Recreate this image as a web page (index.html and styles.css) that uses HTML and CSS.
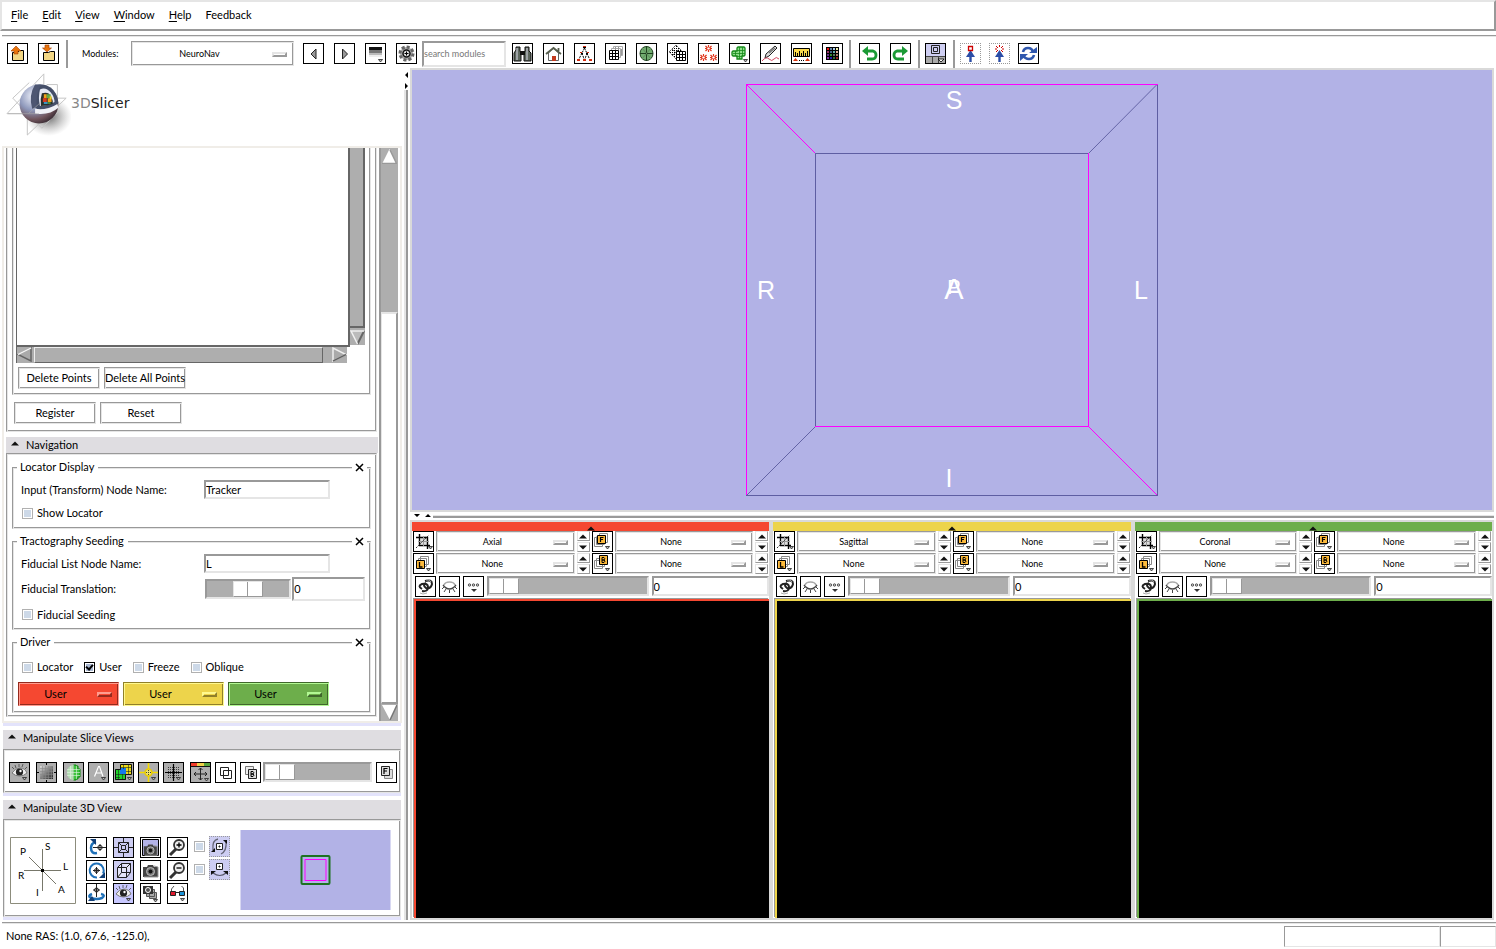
FILE: index.html
```html
<!DOCTYPE html>
<html lang="en">
<head>
<meta charset="utf-8">
<title>3D Slicer</title>
<link rel="stylesheet" href="styles.css">
</head>
<body>
<svg class="defs" aria-hidden="true">
  <defs>
    <pattern id="dots" width="2" height="2" patternUnits="userSpaceOnUse"><rect width="1" height="1" fill="#000"/></pattern>
    <linearGradient id="fade" x1="0" y1="0" x2="1" y2="1"><stop offset="0" stop-color="#ddd"/><stop offset="1" stop-color="#222"/></linearGradient>
    <symbol id="drop" viewBox="0 0 5 4"><path d="M.5.5h4L2.5 3z" fill="#bbb" stroke="#222" stroke-width=".8"/></symbol>
    <symbol id="i-fit" viewBox="0 0 19 19"><path d="M7 6l5-2 2 2v6H6z" fill="#ddd"/><path d="M5.500 2v11.500H16M2 5.500h11.500V17" fill="none" stroke="#000" stroke-width="1.400"/><path d="M9.500 4v10M4 9.500h11" stroke="#999"/><path d="M2 16L15 3" stroke="#333" stroke-dasharray="2 1"/><use href="#drop" x="14" y="14" width="5" height="4"/></symbol>
    <symbol id="i-label" viewBox="0 0 19 19"><path d="M6.500 2.500h8v8h-8zM4.500 4.500h8v8h-8z" fill="#fff" stroke="#888"/><path d="M2.500 6.500h8v8h-8z" fill="#fdba3b" stroke="#000"/><path d="M5.500 8v5h3" fill="none" stroke="#000" stroke-width="1.300"/><use href="#drop" x="12" y="14" width="5" height="4"/></symbol>
    <symbol id="i-fore" viewBox="0 0 19 19"><path d="M1.500 5.500h8v9h-8zM6.500 1.500h8v9h-8z" fill="#fff" stroke="#888"/><path d="M3.500 4.500v8h8" fill="none" stroke="#888"/><path d="M4.500 3.500h8v8h-8z" fill="#fdba3b" stroke="#000"/><path d="M7.500 10v-4.500h3M7.500 7.500h2.500" fill="none" stroke="#000" stroke-width="1.200"/><use href="#drop" x="12" y="14" width="5" height="4"/></symbol>
    <symbol id="i-back" viewBox="0 0 19 19"><path d="M1.500 6.500h8v8h-8zM3.500 4.500h8v8h-8z" fill="#fff" stroke="#888"/><path d="M6.500 1.500h8v9h-8z" fill="#fdba3b" stroke="#000"/><path d="M9 8.500v-5h2q1.500 1 0 2.500h-2h2q2 1 0 2.500z" fill="none" stroke="#000"/><use href="#drop" x="12" y="14" width="5" height="4"/></symbol>
    <symbol id="i-link" viewBox="0 0 19 19"><g fill="none" stroke="#222" stroke-width="2"><path d="M6 12Q1 9 6 7Q12 6 12 10Q12 15 6 14"/><path d="M9 4Q16 2 16 7Q15 12 10 11Q6 8 10 6"/></g><path d="M4 16l3 1 4-1M10 3q4-1 5 2" fill="none" stroke="#aaa"/></symbol>
    <symbol id="i-lash" viewBox="0 0 19 19"><path d="M4 8Q5 5 9.500 5T15 8" fill="none" stroke="#aaa" stroke-width="1.500"/><path d="M3 8q3 4 6.500 4T16 8" fill="none" stroke="#444" stroke-width="1.300"/><path d="M4 10l-2 2M6 12l-2 3M9.500 13v3M13 12l2 3M15 10l2 2" stroke="#444"/></symbol>
    <symbol id="i-more" viewBox="0 0 19 19"><g fill="#ccc" stroke="#333" stroke-width=".8"><circle cx="5.500" cy="8" r="1.200"/><circle cx="9.500" cy="8" r="1.200"/><circle cx="13.500" cy="8" r="1.200"/></g><path d="M7 12h6l-3 3z" fill="#333"/></symbol>
    <symbol id="i-cam" viewBox="0 0 19 19"><path d="M2 6h4l1-2h5l1 2h4v10H2z" fill="#444"/><circle cx="9.500" cy="10.500" r="4" fill="#777" stroke="#bbb"/><circle cx="9.500" cy="10.500" r="2" fill="#111"/><path d="M13 5l4 1v10M3 16h14" fill="none" stroke="#999"/></symbol>
    <symbol id="i-eye" viewBox="0 0 19 19"><path d="M2 10Q5 5 10 5t7 5Q14 13 9.500 13T2 10z" fill="#eee" stroke="#777"/><circle cx="9.500" cy="9" r="3.600" fill="#222"/><circle cx="10.500" cy="8" r="1.200" fill="#fff"/><path d="M4 6L2 4M6 5L5 2M9 4V1M12 4l1-3M15 6l2-2" stroke="#444" stroke-width=".8"/><use href="#drop" x="12" y="14" width="5" height="4"/></symbol>
    <symbol id="i-x" viewBox="0 0 9 9"><path d="M1 1l7 7M8 1L1 8" stroke="#000" stroke-width="1.500"/></symbol>
    <symbol id="i-up" viewBox="0 0 8 5"><path d="M0 4.500L4 .5l4 4z" fill="#111"/></symbol>
    <symbol id="i-down" viewBox="0 0 8 5"><path d="M0 .5h8l-4 4z" fill="#111"/></symbol>
  </defs>
</svg>

<nav class="menubar">
  <button><u>F</u>ile</button><button><u>E</u>dit</button><button><u>V</u>iew</button><button><u>W</u>indow</button><button><u>H</u>elp</button><button>Feedback</button>
</nav>

<div class="toolbar">
  <div class="tools">
    <button class="ico" aria-label="Load scene"><svg viewBox="0 0 19 19"><path d="M4.500 8.500h5l2-2h4v10h-11z" fill="#f2d684" stroke="#000"/><path d="M8 2L3 7h3v3h4V7h3z" fill="#e8740c" stroke="#a33c00" stroke-width=".6"/></svg></button>
    <button class="ico" aria-label="Save scene"><svg viewBox="0 0 19 19"><path d="M4.500 8.500h5l2-1h4v9h-11z" fill="#f2d684" stroke="#000"/><path d="M8 8L3.500 4H6V1h4v3h2.500z" fill="#e8740c" stroke="#a33c00" stroke-width=".6"/></svg></button>
  </div>
  <span class="sep"></span>
  <label class="modules-label" for="modules">Modules:</label>
  <span class="option modules"><select id="modules"><option>NeuroNav</option></select></span>
  <div class="tools">
    <button class="ico" aria-label="Previous module"><svg viewBox="0 0 19 19"><path d="M12 5v10L7 10z" fill="#999" stroke="#222"/></svg></button>
    <button class="ico" aria-label="Next module"><svg viewBox="0 0 19 19"><path d="M7.500 5v10l5-5z" fill="#999" stroke="#222"/></svg></button>
    <button class="ico" aria-label="Module history"><svg viewBox="0 0 19 19"><path d="M3 3h13v3H3z" fill="#111"/><path d="M3 6h13v3H3z" fill="#777"/><path d="M3 9h13v2H3z" fill="#bbb"/><path d="M3 11h13v2H3z" fill="#eee"/><use href="#drop" x="12" y="15" width="5" height="4"/></svg></button>
    <button class="ico" aria-label="Refresh modules"><svg viewBox="0 0 19 19"><circle cx="9.500" cy="9.500" r="6.500" fill="#aaa" stroke="#666" stroke-width="3" stroke-dasharray="3 2"/><circle cx="9.500" cy="9.500" r="3.500" fill="#ddd" stroke="#111" stroke-width="1.500"/><path d="M9.500 7.500v4M7.500 9.500h4" stroke="#000"/></svg></button>
  </div>
  <input class="entry search" type="text" placeholder="search modules" aria-label="search modules">
  <div class="tools">
    <button class="ico" aria-label="Find"><svg viewBox="0 0 19 19"><path d="M3 3h4v4l1 2v8H1v-8l2-3zM12 3h4v4l2 2v8h-7V9l1-2z" fill="#5c665c" stroke="#111"/><path d="M7 7h5v4H7z" fill="#111"/><path d="M4 4v12M14 4v12" stroke="#dde"/></svg></button>
    <button class="ico" aria-label="Home"><svg viewBox="0 0 19 19"><path d="M4.500 9v7.500h10V9l-5-5z" fill="#fff" stroke="#666"/><path d="M2 10l7.500-6 7.500 6M14.500 7V4" fill="none" stroke="#555d4c" stroke-width="1.800"/><path d="M8 12h4v5H8z" fill="#c33a1e"/></svg></button>
    <button class="ico" aria-label="Data"><svg viewBox="0 0 19 19"><path d="M9.500 4L4 15M9.500 4l5 11M7 9l2 6M12 9l-2 6" stroke="#000" stroke-dasharray="2 1"/><path d="M8 2h3v1H8zM5 8h2v1H5zM12 8h2v1h-2zM2 15h3v2H2zM8 15h3v2H8zM14 15h3v2h-3z" fill="#d32d10"/><path d="M8 3.500h3M6 9.500h2M11 9.500h2" stroke="#000"/></svg></button>
    <button class="ico" aria-label="Volumes"><svg viewBox="0 0 19 19"><g fill="#fff" stroke="#aaa"><path d="M7.500 2.500h9v9h-9z"/><path d="M5.500 4.500h9v9h-9z"/></g><g stroke="#999"><path d="M9.500 3v3M12.500 3v3M15.500 5v6"/></g><path d="M3.500 6.500h9v9h-9zM3.500 9.500h9M3.500 12.500h9M6.500 6.500v9M9.500 6.500v9" fill="#fff" stroke="#000"/></svg></button>
    <button class="ico" aria-label="Models"><svg viewBox="0 0 19 19"><ellipse cx="9.500" cy="9.500" rx="6.500" ry="7" fill="#72ad70" stroke="#20401f"/><path d="M9.500 2v15M3 9.500h13" stroke="#20401f"/><path d="M5 4l9 11M14 4L5 15" stroke="#5b8b59"/></svg></button>
    <button class="ico" aria-label="Transforms"><svg viewBox="0 0 19 19"><path d="M8 1l7 7-7 7-7-7z" fill="url(#dots)"/><path d="M8 1l7 7-7 7-7-7zM4 5l7 7M5 11l7-7" fill="none" stroke="#222" stroke-dasharray="1 1"/><path d="M8.500 7.500h9v9h-9zM8.500 10.500h9M8.500 13.500h9M11.500 7.500v9M14.500 7.500v9" fill="#fff" stroke="#000"/></svg></button>
    <button class="ico" aria-label="Fiducials"><svg viewBox="0 0 19 19"><g stroke="#e0341a" stroke-width="1.200"><path id="burst" d="M9.500 1v2.500M9.500 5.500V8M6.500 2l2 2M12.500 2l-2 2M6.500 7l2-2M12.500 7l-2-2M6 4.500h2M11 4.500h2"/><use href="#burst" x="-5" y="9"/><use href="#burst" x="5" y="9"/></g></svg></button>
    <button class="ico" aria-label="Editor"><svg viewBox="0 0 19 19"><path d="M8 3h6l1 1v7l-1 1h-2v3H7v-3H3l-1-1V8l1-1h4V4z" fill="#8fe08c" stroke="#178a1b" stroke-width="1.300"/><path d="M3 9.500h12M9.500 3v12M12.500 3v9M5.500 7v5M7 6.500h8M6 12.500h6" stroke="#178a1b" stroke-width=".8"/><use href="#drop" x="13" y="15" width="5" height="4"/></svg></button>
    <button class="ico" aria-label="Annotate"><svg viewBox="0 0 19 19"><path d="M5 10L14 2l2 2-8 8-4 2z" fill="#ddd" stroke="#222"/><path d="M8 9l6-5" stroke="#777" stroke-width="1.500"/><path d="M1 17q4-5 7-2t5 0 5 0" fill="none" stroke="#d34a62"/></svg></button>
    <button class="ico" aria-label="Measurements"><svg viewBox="0 0 19 19"><path d="M1.500 4.500h16v8h-16z" fill="#fbd94b" stroke="#000"/><path d="M3.500 8v4M5.500 9v3M7.500 7v5M9.500 9v3M11.500 7v5M13.500 9v3M15.500 7v5" stroke="#000"/><path d="M1 17l2.500-3L6 17zM13 17l2.500-3L18 17z" fill="#d8340e"/><path d="M7 16.500h6" stroke="#000" stroke-dasharray="1 1"/></svg></button>
    <button class="ico" aria-label="Colors"><svg viewBox="0 0 19 19"><path d="M3 3h13v13H3z" fill="#000"/><g><path d="M4 4h2v2H4z" fill="#e11"/><path d="M7 4h2v2H7z" fill="#68a"/><path d="M10 4h2v2h-2z" fill="#ace"/><path d="M13 4h2v2h-2z" fill="#eea"/><path d="M4 7h2v2H4z" fill="#936"/><path d="M7 7h2v2H7z" fill="#468"/><path d="M10 7h2v2h-2z" fill="#6aa"/><path d="M13 7h2v2h-2z" fill="#da9"/><path d="M4 10h2v2H4z" fill="#638"/><path d="M7 10h2v2H7z" fill="#383"/><path d="M10 10h2v2h-2z" fill="#575"/><path d="M13 10h2v2h-2z" fill="#a76"/><path d="M4 13h2v2H4z" fill="#83a"/><path d="M7 13h2v2H7z" fill="#22a"/><path d="M10 13h2v2h-2z" fill="#363"/><path d="M13 13h2v2h-2z" fill="#922"/></g></svg></button>
  </div>
  <span class="sep sep-wide"></span>
  <div class="tools">
    <button class="ico" aria-label="Undo"><svg viewBox="0 0 19 19"><path d="M5 7h8q3 1 3 4 0 4-4 4H7" fill="none" stroke="#1a9a35" stroke-width="2.800"/><path d="M8 2v10L2 7z" fill="#1a9a35"/></svg></button>
    <button class="ico" aria-label="Redo"><svg viewBox="0 0 19 19"><path d="M14 7H6q-3 1-3 4 0 4 4 4h6" fill="none" stroke="#1a9a35" stroke-width="2.800"/><path d="M11 2v10l6-5z" fill="#1a9a35"/></svg></button>
  </div>
  <span class="sep"></span>
  <button class="ico" aria-label="Layout"><svg viewBox="0 0 19 19"><path d="M0 0h19v12H0z" fill="#cfcff2"/><path d="M0 12h19v7H0z" fill="#aaa"/><path d="M0 12.500h19M6.500 13v6M12.500 13v6" stroke="#444"/><path d="M5.500 1.500h8v8h-8zM7.500 3.500h4v4h-4z" fill="none" stroke="#222"/><path d="M12 15h6l-3 3z" fill="#fff" stroke="#000" stroke-width=".8"/></svg></button>
  <span class="sep"></span>
  <button class="ico dotted" aria-label="Place fiducial"><svg viewBox="0 0 19 19"><path d="M9.500 18V10" stroke="#2b4da6" stroke-width="2.400"/><path d="M5 13l4.500-7 4.500 7z" fill="#2b4da6"/><path d="M7.500 2.500h4v4h-4z" fill="#fff" stroke="#c00" stroke-width="1.300"/></svg></button>
  <button class="ico dotted" aria-label="Place point"><svg viewBox="0 0 19 19"><path d="M9.500 18V10" stroke="#2b4da6" stroke-width="2.400"/><path d="M5 13l4.500-7 4.500 7z" fill="#2b4da6"/><path d="M9.500 1v2M6 2l2 2M13 2l-2 2M5 5h2M12 5h2M6 8l2-2M13 8l-2-2" stroke="#c00"/></svg></button>
  <button class="ico" aria-label="Rotate"><svg viewBox="0 0 19 19"><path d="M4 8q1-4 5-4 4 0 5 4M15 11q-1 4-5 4-4 0-6-4" fill="none" stroke="#2f57ae" stroke-width="2.600"/><path d="M10 9h8V3zM9 10H1v7z" fill="#2f57ae"/></svg></button>
</div>

<main class="main">
  <aside class="side">
    <div class="brand">
      <svg class="globe" viewBox="-1 -3 68 68" aria-hidden="true">
        <defs>
          <radialGradient id="ball" cx=".35" cy=".3" r=".8"><stop offset="0" stop-color="#eef1fb"/><stop offset=".45" stop-color="#8e98bb"/><stop offset=".75" stop-color="#70545c"/><stop offset="1" stop-color="#2a2028"/></radialGradient>
          <radialGradient id="shade"><stop offset="0" stop-color="#333" stop-opacity=".75"/><stop offset="1" stop-color="#888" stop-opacity="0"/></radialGradient>
        </defs>
        <ellipse cx="44" cy="45" rx="24" ry="20" fill="url(#shade)"/>
        <g fill="none" stroke="#c4c4c4"><path d="M1 42L39 1v20M22 64V44M22 64l40-38H52M7 26L37 57l18-18M7 26L24 10M42 12h11v14M1 42h24"/></g>
        <circle cx="34" cy="32" r="20" fill="url(#ball)"/>
        <path d="M31 13q8-3 15 2 7 5 8 16l-3 3q-11 3-17 4l-4-2q-2-12 1-23z" fill="#454f69"/>
        <path d="M35 17q6-3 11 3 4 5 4 10-7 4-15 4-2-9 0-17z" fill="#e4e8f4"/>
        <path d="M37 21q7-2 9 3 3 4 2 8-6 2-12 2-1-7 1-13z" fill="#2b2f2b"/>
        <path d="M39 22h3v4h-3zM43 26h4v4h-4z" fill="#f0a019"/><path d="M42 22h4v4h-4z" fill="#63a944"/><path d="M38 26h4v4h-4z" fill="#d63a22"/><path d="M45 24h2v3h-2z" fill="#e6cf35"/><path d="M39 30h4v2h-4z" fill="#3b98c7"/><path d="M43 30h3v2h-3z" fill="#4b8c35"/>
        <path d="M30 37q12 2 23-5l1 4q-9 8-24 6z" fill="#f0f1f7"/>
        <path d="M27 37q-4-14 3-25l6 0q-6 11-4 23z" fill="#4d5672"/>
        <path d="M2 42h32M23 42l12-11" stroke="#aaa" opacity=".6"/>
      </svg>
      <span class="wordmark"><span class="dim">3D</span>Slicer</span>
    </div>

    <div class="scroller">
      <div class="scroll-view">
        <section class="registration">
          <div class="groove list-frame">
            <div class="listwrap">
              <div class="listbox"></div>
              <div class="vbar"><span class="vthumb"></span><svg class="arrow" viewBox="0 0 15 15"><path d="M1 1h13L7.500 14z" fill="#bbb"/><path d="M14 1L7.500 14" stroke="#666" stroke-width="2"/><path d="M7.500 14L1 1h13" fill="none" stroke="#f0f0f0" stroke-width="1.500"/></svg></div>
              <div class="hbar"><svg class="arrow" viewBox="0 0 15 15"><path d="M14 1L1 7.500 14 14z" fill="#aaa" stroke="#666" stroke-width="1.500"/><path d="M14 1L1 7.500" stroke="#f0f0f0" stroke-width="1.500"/></svg><span class="hthumb"></span><svg class="arrow" viewBox="0 0 15 15"><path d="M1 14L14 7.500 1 1z" fill="#aaa" stroke="#f0f0f0" stroke-width="1.500"/><path d="M1 14l13-6.500" stroke="#666" stroke-width="1.500"/></svg></div>
            </div>
            <div class="btns"><button class="groove btn">Delete Points</button><button class="groove btn">Delete All Points</button></div>
          </div>
          <div class="btns"><button class="groove btn">Register</button><button class="groove btn">Reset</button></div>
        </section>

        <section class="nav">
          <button class="head nav-head"><svg class="tri"><use href="#i-up"/></svg>Navigation</button>
          <div class="groove nav-body">
            <fieldset class="groove group">
              <legend>Locator Display</legend>
              <button class="close" aria-label="Close Locator Display"><svg><use href="#i-x"/></svg></button>
              <div class="field tall"><label for="node">Input (Transform) Node Name:</label><input class="entry name" id="node" type="text" value="Tracker"></div>
              <div class="field"><label class="check"><input type="checkbox">Show Locator</label></div>
            </fieldset>
            <fieldset class="groove group">
              <legend>Tractography Seeding</legend>
              <button class="close" aria-label="Close Tractography Seeding"><svg><use href="#i-x"/></svg></button>
              <div class="field tall"><label for="fid">Fiducial List Node Name:</label><input class="entry name" id="fid" type="text" value="L"></div>
              <div class="field tall"><label for="trans">Fiducial Translation:</label><input class="slider mid" id="trans" type="range" value="50"><input class="entry amount" type="text" value="0" aria-label="Translation value"></div>
              <div class="field last"><label class="check"><input type="checkbox">Fiducial Seeding</label></div>
            </fieldset>
            <fieldset class="groove group driver">
              <legend>Driver</legend>
              <button class="close" aria-label="Close Driver"><svg><use href="#i-x"/></svg></button>
              <div class="field checks"><label class="check"><input type="checkbox">Locator</label><label class="check"><input type="checkbox" checked>User</label><label class="check"><input type="checkbox">Freeze</label><label class="check"><input type="checkbox">Oblique</label></div>
              <div class="drivers">
                <span class="option red"><select aria-label="Red driver"><option>User</option></select></span>
                <span class="option yellow"><select aria-label="Yellow driver"><option>User</option></select></span>
                <span class="option green"><select aria-label="Green driver"><option>User</option></select></span>
              </div>
            </fieldset>
          </div>
        </section>
      </div>
      <div class="mainbar">
        <svg class="arrow" viewBox="0 0 15 15"><path d="M7.500 0L15 15H0z" fill="#fff"/><path d="M8 1l6.500 13.500H0" fill="none" stroke="#999" stroke-width="1.500"/></svg>
        <span class="trough"></span><span class="mthumb"></span>
        <svg class="arrow" viewBox="0 0 15 15"><path d="M0 0h15L8 15z" fill="#fff"/><path d="M15 0L8 15" stroke="#777" stroke-width="1.500"/></svg>
      </div>
    </div>

    <section class="block">
      <button class="head"><svg class="tri"><use href="#i-up"/></svg>Manipulate Slice Views</button>
      <div class="groove slice-tools">
        <button class="ico gray" aria-label="Visibility"><svg><use href="#i-eye"/></svg></button>
        <button class="ico gray g7" aria-label="Fit"><svg viewBox="0 0 19 19"><path d="M3 3h13v13H3z" fill="url(#fade)"/><path d="M5.500 3v13M8.500 3v13M11.500 3v13M14.500 3v13M3 5.500h13M3 8.500h13M3 11.500h13M3 14.500h13" stroke="#888" stroke-width=".6"/><path d="M9.500 0v2M9.500 17v2M0 9.500h2M17 9.500h2" stroke="#000"/></svg></button>
        <button class="ico gray g7" aria-label="Label outline"><svg viewBox="0 0 19 19"><path d="M9.500 2Q3 3 3 9.500T9.500 17z" fill="#b5ddb5"/><path d="M9.500 2H12v1h2v3h2v8h-2v2h-2v1H9.500z" fill="#3fc43f" stroke="#0b8a0b"/><path d="M3 6.500h13M3 9.500h13M3 12.500h13M6.500 3v13M9.500 2v15M12.500 3v13" stroke="#e4f4e4" stroke-width=".6"/></svg></button>
        <button class="ico gray" aria-label="Annotation"><svg viewBox="0 0 19 19"><path d="M5.500 13.500l4-10h1l3.500 10M7 10h6" fill="none" stroke="#fff" stroke-width="1.200"/><use href="#drop" x="12" y="14" width="5" height="4"/></svg></button>
        <button class="ico gray" aria-label="Compositing"><svg viewBox="0 0 19 19"><path d="M6 1h12v11H6z" fill="#eddb18"/><path d="M1 6h11v11H1z" fill="#20d32c"/><path d="M6 5h6v6H6z" fill="#1479ee"/><path d="M9.500 1v5M14.500 1v11M6 4.500h12M12 8.500h6M1 11.500h11M1 14.500h5M4.500 6v11M8.500 11v6" stroke="#172a17" stroke-width=".6"/><path d="M6.500 1.500h11v10h-6v5h-10v-10h5z" fill="none" stroke="#111"/><use href="#drop" x="13" y="14" width="5" height="4"/></svg></button>
        <button class="ico gray" aria-label="Crosshair"><svg viewBox="0 0 19 19"><path d="M9.500 0v6M9.500 13v6M0 9.500h6M13 9.500h6" stroke="#f5dc00" stroke-width="1.600"/><circle cx="9.500" cy="9.500" r="3.500" fill="#eee370" stroke="#e9cb00" stroke-width="1.500"/><path d="M7 9.500h5M9.500 7v5" stroke="#443" stroke-dasharray="1 1"/><use href="#drop" x="12" y="14" width="5" height="4"/></svg></button>
        <button class="ico gray" aria-label="Grid"><svg viewBox="0 0 19 19"><path d="M3 3h13v13H3z" fill="url(#dots)" opacity=".65"/><path d="M9.500 1v17M1 9.500h17" stroke="#000" stroke-width="1.200"/><use href="#drop" x="12" y="14" width="5" height="4"/></svg></button>
        <button class="ico gray g7" aria-label="Navigation mode"><svg viewBox="0 0 19 19"><path d="M0 0h6v3H0z" fill="#f03b2b"/><path d="M6 0h7v3H6z" fill="#eed149"/><path d="M13 0h6v3h-6z" fill="#58a53f"/><path d="M0 3.500h19" stroke="#111"/><path d="M9.500 5v12M3 11h13M7.500 7l2-2 2 2M7.500 15l2 2 2-2M5 9l-2 2 2 2M14 9l2 2-2 2" fill="none" stroke="#222"/><use href="#drop" x="13" y="15" width="5" height="4"/></svg></button>
        <button class="ico" aria-label="Swap layers"><svg viewBox="0 0 19 19"><path d="M4.500 4.500h8v8h-8z" fill="none" stroke="#222"/><path d="M7.500 7.500h8v8h-8z" fill="none" stroke="#222"/></svg></button>
        <button class="ico" aria-label="Background layer"><svg viewBox="0 0 19 19"><path d="M4.500 3.500h8v8h-8z" fill="#eee" stroke="#777"/><path d="M7.500 6.500h8v9h-8z" fill="#ddd" stroke="#222"/><path d="M10 13.500v-5h2q1.500 1 0 2.500h-2h2q2 1 0 2.500z" fill="none" stroke="#000"/></svg></button>
        <input class="slider opacity" type="range" value="0" aria-label="Layer opacity">
        <button class="ico" aria-label="Foreground layer"><svg viewBox="0 0 19 19"><path d="M7.500 6.500h8v9h-8z" fill="#ddd" stroke="#888"/><path d="M4.500 3.500h8v9h-8z" fill="#ddd" stroke="#222"/><path d="M7 11V5.500h3.500M7 8h3" fill="none" stroke="#000" stroke-width="1.200"/></svg></button>
      </div>
    </section>

    <section class="block">
      <button class="head"><svg class="tri"><use href="#i-up"/></svg>Manipulate 3D View</button>
      <div class="groove view-tools">
        <svg class="axes" viewBox="0 0 66 67"><path d="M.5.5h65v66H.5z" fill="#fff" stroke="#8c8c7c"/><path d="M32.500 12v42M14 33.500h37M19 20l27 27" stroke="#77776a"/><path d="M31 32h3v3h-3z" fill="#000"/><text x="35" y="13">S</text><text x="10" y="18">P</text><text x="53" y="33">L</text><text x="8" y="42">R</text><text x="26" y="59">I</text><text x="48" y="56">A</text></svg>
        <div class="view-icons">
          <button class="ico" aria-label="Pitch"><svg viewBox="0 0 19 19"><path d="M9 4q-5 1-5 6 0 6 6 5" fill="none" stroke="#1e70b8" stroke-width="2.500"/><path d="M3 1h6v6z" fill="#123f77"/><circle cx="13" cy="9.500" r="2.200" fill="#fff" stroke="#222"/><path d="M6 9.500h13M13 6v7" stroke="#222"/></svg></button>
          <button class="ico blue" aria-label="Center view"><svg viewBox="0 0 19 19"><path d="M4.500 4.500h10v10h-10zM7.500 7.500h4v4h-4zM9.500 0v4M9.500 15v4M0 9.500h4M15 9.500h4M4.500 4.500l3 3M14.500 4.500l-3 3M4.500 14.500l3-3M14.500 14.500l-3-3" fill="none" stroke="#222"/></svg></button>
          <button class="ico" aria-label="Screenshot view"><svg viewBox="0 0 19 19"><path d="M1.500 1.500h16v16h-16z" fill="#b2b2e6" stroke="#000"/><use href="#i-cam" y="3" width="19" height="17"/></svg></button>
          <button class="ico" aria-label="Zoom in"><svg viewBox="0 0 19 19"><path d="M8 11l-6 6" stroke="#333" stroke-width="3"/><circle cx="11" cy="7" r="5" fill="#eee" stroke="#333" stroke-width="1.800"/><path d="M8.500 7h5M11 4.500v5" stroke="#000" stroke-width="1.300"/></svg></button>
          <button class="ico" aria-label="Roll"><svg viewBox="0 0 19 19"><path d="M10 16.500a7 7 0 1 1 6-4" fill="none" stroke="#1e70b8" stroke-width="2"/><path d="M12 17h6v-6z" fill="#123f77"/><circle cx="9.500" cy="9.500" r="2" fill="#fff" stroke="#222"/><path d="M6 9.500h7M9.500 6v7" stroke="#222"/></svg></button>
          <button class="ico blue" aria-label="Orthographic"><svg viewBox="0 0 19 19"><path d="M3.500 6.500h9v10h-9zM3.500 6.500l4-4h9v9l-4 5M12.500 6.500l4-4M7.500 2.500v9h9M7.500 11.500l-4 5" fill="#fff" fill-opacity=".5" stroke="#222"/></svg></button>
          <button class="ico" aria-label="Snapshot"><svg><use href="#i-cam"/></svg></button>
          <button class="ico" aria-label="Zoom out"><svg viewBox="0 0 19 19"><path d="M8 11l-6 6" stroke="#333" stroke-width="3"/><circle cx="11" cy="7" r="5" fill="#eee" stroke="#333" stroke-width="1.800"/><path d="M8.500 7h5" stroke="#000" stroke-width="1.300"/></svg></button>
          <button class="ico" aria-label="Yaw"><svg viewBox="0 0 19 19"><path d="M5 10q-5 2-1 4 6 2 11 0 4-3-1-4" fill="none" stroke="#1e70b8" stroke-width="2.500"/><path d="M1 17h7l-3-5z" fill="#123f77"/><circle cx="9.500" cy="6" r="2" fill="#fff" stroke="#222"/><path d="M6 6h7M9.500 0v13" stroke="#222"/></svg></button>
          <button class="ico lilac" aria-label="3D visibility"><svg><use href="#i-eye"/></svg></button>
          <button class="ico" aria-label="Scene snapshots"><svg viewBox="0 0 19 19"><path d="M8.500 8.500h7v6h-7zM5.500 5.500h8v7h-8z" fill="#aaa" stroke="#555"/><path d="M2 2h10v8H2z" fill="#333"/><circle cx="7" cy="6" r="2.500" fill="#555" stroke="#fff"/><use href="#drop" x="12" y="15" width="5" height="4"/></svg></button>
          <button class="ico" aria-label="Stereo"><svg viewBox="0 0 19 19"><path d="M3.500 8V5L6 2M15.500 8V4l-2-2" fill="none" stroke="#555"/><path d="M2.500 7.500h5v4h-5z" fill="#e0182d" stroke="#222"/><path d="M11.500 7.500h5v4h-5z" fill="#1a93d8" stroke="#222"/><path d="M8 8.500h3" stroke="#222"/><use href="#drop" x="12" y="14" width="5" height="4"/></svg></button>
        </div>
        <div class="motion">
          <input type="checkbox" aria-label="Spin"><span class="ico dotted blue"><svg viewBox="0 0 19 19"><path d="M6.500 6.500h6v6h-6zM9 9h1v1h-1z" fill="#fff" stroke="#222"/><path d="M8 2Q2 3 3 13M11 17q6-3 5-13" fill="none" stroke="#667" stroke-width="1.300"/><path d="M1 15h4v-4zM13 3h4v4z" fill="#111"/></svg></span>
          <input type="checkbox" aria-label="Rock"><span class="ico dotted blue"><svg viewBox="0 0 19 19"><path d="M6.500 3.500h6v6h-6zM9 6h1v1h-1z" fill="#fff" stroke="#222"/><path d="M3 13q7 5 13 0" fill="none" stroke="#556" stroke-width="1.200"/><path d="M1 15v-4h5zM18 15v-4h-5z" fill="#111"/></svg></span>
        </div>
        <svg class="overview" viewBox="0 0 150 80"><path d="M0 0h150v80H0z" fill="#b2b2e6"/><rect x="61" y="26" width="28" height="28" rx="1" fill="none" stroke="#1d7320" stroke-width="2"/><path d="M64.500 29.500h21v21h-21z" fill="none" stroke="#f0f"/></svg>
      </div>
    </section>
  </aside>

  <div class="vsash"><svg viewBox="0 0 4 18"><path d="M4 0v6L1 3zM1 11v6l3-3z" fill="#000"/></svg></div>

  <div class="views">
    <div class="view3d">
      <svg class="cube" viewBox="0 0 412 412">
        <g fill="none" stroke="#5e5ea2" shape-rendering="crispEdges"><path d="M69.500 343V69.500H343M411.500 0v411.500H0"/></g>
        <g fill="none" stroke="#6464a6"><path d="M343 69L411 .5M69 343L1 411"/></g>
        <g fill="none" stroke="#f0f" shape-rendering="crispEdges"><path d="M.5 411V.5H411.500M342.500 69v273.500H69"/></g>
        <g fill="none" stroke="#f0f"><path d="M1 1l68 68M343 343l68 68"/></g>
        <g class="marks"><text x="208" y="25">S</text><text x="20" y="215">R</text><text x="395" y="215">L</text><text x="203" y="403">I</text><text class="near" x="208" y="215">A</text><text class="far" x="208" y="210">P</text></g>
      </svg>
    </div>
    <div class="hsash"><svg viewBox="0 0 18 4"><path d="M0 0h6L3 3zM11 3h6l-3-3z" fill="#000"/></svg><span></span></div>
    <div class="panes">
      <section class="pane p-red">
        <button class="strip" aria-label="Collapse red controls"><svg class="tri"><use href="#i-up"/></svg></button>
        <div class="pane-row">
          <button class="ico" aria-label="Fit"><svg><use href="#i-fit"/></svg></button>
          <span class="option"><select aria-label="Orientation"><option>Axial</option></select></span>
          <span class="spin"><button aria-label="Next"><svg><use href="#i-up"/></svg></button><button aria-label="Previous"><svg><use href="#i-down"/></svg></button></span>
          <button class="ico" aria-label="Foreground"><svg><use href="#i-fore"/></svg></button>
          <span class="option"><select aria-label="Foreground volume"><option>None</option></select></span>
          <span class="spin"><button aria-label="Next"><svg><use href="#i-up"/></svg></button><button aria-label="Previous"><svg><use href="#i-down"/></svg></button></span>
          <button class="ico" aria-label="Label"><svg><use href="#i-label"/></svg></button>
          <span class="option"><select aria-label="Label volume"><option>None</option></select></span>
          <span class="spin"><button aria-label="Next"><svg><use href="#i-up"/></svg></button><button aria-label="Previous"><svg><use href="#i-down"/></svg></button></span>
          <button class="ico" aria-label="Background"><svg><use href="#i-back"/></svg></button>
          <span class="option"><select aria-label="Background volume"><option>None</option></select></span>
          <span class="spin"><button aria-label="Next"><svg><use href="#i-up"/></svg></button><button aria-label="Previous"><svg><use href="#i-down"/></svg></button></span>
        </div>
        <div class="pane-slide">
          <button class="ico" aria-label="Link"><svg><use href="#i-link"/></svg></button><button class="ico" aria-label="Slice visibility"><svg><use href="#i-lash"/></svg></button><button class="ico" aria-label="More"><svg><use href="#i-more"/></svg></button>
          <input class="slider" type="range" value="0" aria-label="Slice offset"><input class="entry offset" type="text" value="0" aria-label="Offset value">
        </div>
        <div class="slice"></div>
      </section>
      <section class="pane p-yellow">
        <button class="strip" aria-label="Collapse yellow controls"><svg class="tri"><use href="#i-up"/></svg></button>
        <div class="pane-row">
          <button class="ico" aria-label="Fit"><svg><use href="#i-fit"/></svg></button>
          <span class="option"><select aria-label="Orientation"><option>Sagittal</option></select></span>
          <span class="spin"><button aria-label="Next"><svg><use href="#i-up"/></svg></button><button aria-label="Previous"><svg><use href="#i-down"/></svg></button></span>
          <button class="ico" aria-label="Foreground"><svg><use href="#i-fore"/></svg></button>
          <span class="option"><select aria-label="Foreground volume"><option>None</option></select></span>
          <span class="spin"><button aria-label="Next"><svg><use href="#i-up"/></svg></button><button aria-label="Previous"><svg><use href="#i-down"/></svg></button></span>
          <button class="ico" aria-label="Label"><svg><use href="#i-label"/></svg></button>
          <span class="option"><select aria-label="Label volume"><option>None</option></select></span>
          <span class="spin"><button aria-label="Next"><svg><use href="#i-up"/></svg></button><button aria-label="Previous"><svg><use href="#i-down"/></svg></button></span>
          <button class="ico" aria-label="Background"><svg><use href="#i-back"/></svg></button>
          <span class="option"><select aria-label="Background volume"><option>None</option></select></span>
          <span class="spin"><button aria-label="Next"><svg><use href="#i-up"/></svg></button><button aria-label="Previous"><svg><use href="#i-down"/></svg></button></span>
        </div>
        <div class="pane-slide">
          <button class="ico" aria-label="Link"><svg><use href="#i-link"/></svg></button><button class="ico" aria-label="Slice visibility"><svg><use href="#i-lash"/></svg></button><button class="ico" aria-label="More"><svg><use href="#i-more"/></svg></button>
          <input class="slider" type="range" value="0" aria-label="Slice offset"><input class="entry offset" type="text" value="0" aria-label="Offset value">
        </div>
        <div class="slice"></div>
      </section>
      <section class="pane p-green">
        <button class="strip" aria-label="Collapse green controls"><svg class="tri"><use href="#i-up"/></svg></button>
        <div class="pane-row">
          <button class="ico" aria-label="Fit"><svg><use href="#i-fit"/></svg></button>
          <span class="option"><select aria-label="Orientation"><option>Coronal</option></select></span>
          <span class="spin"><button aria-label="Next"><svg><use href="#i-up"/></svg></button><button aria-label="Previous"><svg><use href="#i-down"/></svg></button></span>
          <button class="ico" aria-label="Foreground"><svg><use href="#i-fore"/></svg></button>
          <span class="option"><select aria-label="Foreground volume"><option>None</option></select></span>
          <span class="spin"><button aria-label="Next"><svg><use href="#i-up"/></svg></button><button aria-label="Previous"><svg><use href="#i-down"/></svg></button></span>
          <button class="ico" aria-label="Label"><svg><use href="#i-label"/></svg></button>
          <span class="option"><select aria-label="Label volume"><option>None</option></select></span>
          <span class="spin"><button aria-label="Next"><svg><use href="#i-up"/></svg></button><button aria-label="Previous"><svg><use href="#i-down"/></svg></button></span>
          <button class="ico" aria-label="Background"><svg><use href="#i-back"/></svg></button>
          <span class="option"><select aria-label="Background volume"><option>None</option></select></span>
          <span class="spin"><button aria-label="Next"><svg><use href="#i-up"/></svg></button><button aria-label="Previous"><svg><use href="#i-down"/></svg></button></span>
        </div>
        <div class="pane-slide">
          <button class="ico" aria-label="Link"><svg><use href="#i-link"/></svg></button><button class="ico" aria-label="Slice visibility"><svg><use href="#i-lash"/></svg></button><button class="ico" aria-label="More"><svg><use href="#i-more"/></svg></button>
          <input class="slider" type="range" value="0" aria-label="Slice offset"><input class="entry offset" type="text" value="0" aria-label="Offset value">
        </div>
        <div class="slice"></div>
      </section>
    </div>
  </div>
</main>

<footer class="status">
  <span class="status-text">None RAS: (1.0, 67.6, -125.0),</span>
  <span class="progress"></span>
  <span class="progress small"></span>
</footer>
</body>
</html>
```
FILE: styles.css
```css
:root {
  --dark: #999;
  --light: #e5e5e5;
  --trough: #aeaeae;
  --head: #dfdde1;
  --lavender: #b2b2e6;
  --edge: #d9d9d9;
}

*, *::before, *::after { box-sizing: border-box; }

body {
  margin: 0;
  min-height: 100vh;
  display: flex;
  flex-direction: column;
  background: #fff;
  color: #000;
  font: 11px/14px Lato, "Liberation Sans", sans-serif;
}

button, input, select {
  font: inherit;
  color: inherit;
  margin: 0;
  padding: 0;
  border: 0;
  border-radius: 0;
  background: none;
}

svg { display: block; }
.defs { position: absolute; width: 0; height: 0; }

/* Two-tone engraved outline shared by frames, buttons and option menus */
.groove {
  border: 1px solid;
  border-color: var(--dark) var(--light) var(--light) var(--dark);
  box-shadow: inset 1px 1px var(--light), inset -1px -1px var(--dark);
}

.ico {
  flex: none;
  display: block;
  width: 21px;
  height: 21px;
  border: 1px solid #000;
  background: #fff;
}
.ico svg { width: 19px; height: 19px; }
.ico.gray { background: #aeaeae; }
.ico.blue { background: #cdcdf2; }
.ico.lilac { background: #c8c8ff; }
.ico.dotted { border: 1px dotted #999; }

.entry {
  border: 2px solid;
  border-color: var(--dark) var(--light) var(--light) var(--dark);
  background: #fff;
  min-width: 0;
}

.option {
  position: relative;
  display: block;
  min-width: 0;
  border: 1px solid;
  border-color: var(--dark) var(--light) var(--light) var(--dark);
  box-shadow: inset 1px 1px var(--light), inset -1px -1px var(--dark);
}
.option select {
  display: block;
  width: 100%;
  height: 100%;
  appearance: none;
  padding-right: 26px;
  text-align: center;
  text-align-last: center;
}
.option::after {
  content: "";
  position: absolute;
  right: 6px;
  top: calc(50% - 2px);
  width: 15px;
  height: 5px;
  border: 2px solid;
  border-color: var(--light) var(--dark) var(--dark) var(--light);
  pointer-events: none;
}

input[type="checkbox"] {
  appearance: none;
  position: relative;
  flex: none;
  width: 11px;
  height: 11px;
  border: 1px solid #b0b0b0;
  padding: 1px;
  background: #cdd9e8 content-box;
}
input[type="checkbox"]:checked {
  border-color: #000;
  background-color: #a9b8d2;
}
input[type="checkbox"]:checked::after {
  content: "";
  position: absolute;
  left: 2px;
  top: 0;
  width: 5px;
  height: 7px;
  border: solid #000;
  border-width: 0 2px 2px 0;
  rotate: 40deg;
}

.slider {
  appearance: none;
  min-width: 0;
  height: 20px;
  border: 2px solid;
  border-color: var(--dark) var(--light) var(--light) var(--dark);
  background: var(--trough);
}
.slider::-webkit-slider-thumb {
  appearance: none;
  width: 30px;
  height: 16px;
  border: 1px solid;
  border-color: var(--light) var(--dark) var(--dark) var(--light);
  background: linear-gradient(90deg, transparent 13px, #999 13px, #999 14px, transparent 14px) #fff;
}

/* Menu bar and toolbar */
.menubar {
  display: flex;
  gap: 14px;
  height: 31px;
  padding: 0 9px 2px;
  border: 2px solid;
  border-color: var(--light) var(--dark) var(--dark) var(--light);
  margin-bottom: 4px;
}
.menubar u { text-underline-offset: 2px; }

.toolbar {
  display: flex;
  align-items: center;
  height: 33px;
  margin-left: 2px;
  padding: 3px 0 0 5px;
  border-top: 1px solid var(--dark);
  box-shadow: inset 0 1px var(--light);
}
.toolbar > .ico + .ico { margin-left: 8px; }
.tools { display: flex; gap: 10px; }
.sep {
  width: 2px;
  height: 28px;
  margin: 0 5px 0 7px;
  background: var(--dark);
}
.sep-wide { margin-left: 6px; margin-right: 8px; }
.modules-label { width: 49px; margin-left: 9px; font-size: 9px; }
.modules { width: 163px; height: 25px; margin-right: 9px; font-size: 9px; }
.search { width: 84px; height: 26px; margin: 0 6px 0 5px; font-size: 9px; }
.search::placeholder { color: #777; opacity: 1; }

.main {
  flex: 1;
  min-height: 0;
  display: grid;
  grid-template-columns: 403px 7px minmax(0, 1fr);
}

/* Side column */
.side { display: flex; flex-direction: column; padding-left: 2px; }
.brand { display: flex; align-items: center; height: 78px; padding: 0 0 8px 3px; }
.globe { width: 66px; height: 68px; }
.wordmark { font: 14px/18px "DejaVu Sans", sans-serif; color: #222; }
.wordmark .dim { color: #888; }

.scroller {
  flex: 1;
  display: flex;
  min-height: 0;
  border: 2px solid #f0ede8;
  margin-right: 1px;
}
.scroll-view {
  flex: 1;
  display: flex;
  flex-direction: column;
  gap: 5px;
  min-width: 0;
  padding: 0 0 4px 2px;
}
.scroll-view > .registration { flex: 1; }
.nav { margin-right: 1px; }

.registration {
  display: flex;
  flex-direction: column;
  gap: 7px;
  margin-right: 2px;
  padding: 0 5px 7px;
  border: 1px solid;
  border-width: 0 1px 1px;
  border-color: var(--light) var(--light) var(--light) var(--dark);
  box-shadow: inset 1px 0 var(--light), inset -1px -1px var(--dark);
}
.list-frame {
  flex: 1;
  display: flex;
  flex-direction: column;
  border-top: 0;
  padding: 0 4px 5px 3px;
  box-shadow: inset 1px 0 var(--light), inset -1px -1px var(--dark);
}
.listwrap {
  flex: 1;
  display: grid;
  grid-template: minmax(180px, 1fr) 20px / minmax(0, 1fr) 16px;
}
.listbox { border: solid #666; border-width: 0 2px 2px 1px; }
.vbar {
  display: flex;
  flex-direction: column;
  gap: 2px;
  width: 15px;
  margin-bottom: 2px;
  background: var(--trough);
}
.vthumb { flex: 1; border: solid #666; border-width: 0 2px 2px 0; }
.arrow { flex: none; width: 15px; height: 15px; }
.hbar {
  display: flex;
  gap: 2px;
  height: 16px;
  margin-right: 3px;
  background: var(--trough);
  border-left: 1px solid #666;
}
.hthumb {
  flex: 1;
  margin-right: 7px;
  border: 1px solid;
  border-color: #eee #666 #666 #eee;
}
.btns { display: flex; gap: 4px; padding-left: 2px; }
.btn { width: 82px; height: 22px; white-space: nowrap; }

.head {
  display: flex;
  align-items: center;
  gap: 7px;
  width: 100%;
  height: 19px;
  padding: 0 5px 3px;
  background: var(--head);
  text-align: left;
}
.tri { width: 8px; height: 5px; margin-bottom: 4px; }
.nav-head { height: 16px; padding-bottom: 0; }
.nav-body { margin-right: 1px; padding: 6px 5px 3px; }

.group {
  position: relative;
  margin: 0 0 5px;
  padding: 3px 5px 4px 8px;
  min-width: 0;
}
.group:last-child { margin: 0; padding-bottom: 6px; }
.group legend { padding: 0 4px 0 3px; margin-left: -4px; background: #fff; }
.close {
  position: absolute;
  right: 3px;
  top: -11px;
  width: 15px;
  height: 9px;
  padding: 0 3px;
  background: #fff;
}
.close svg { width: 9px; height: 9px; }
.field { display: flex; align-items: center; height: 22px; }
.field.tall { height: 25px; }
.field.tall > label { width: 183px; }
.field.last { height: 24px; padding-top: 3px; }
.name { width: 126px; height: 19px; }
.mid { width: 86px; margin-left: 2px; }
.amount { width: 73px; height: 24px; margin-left: 1px; }
.check { display: flex; align-items: center; gap: 4px; padding-left: 1px; }
.field.checks { gap: 10px; height: 30px; }
.drivers { display: flex; gap: 4px; margin-left: -3px; }
.red, .p-red { --c: #f54831; --lo: #952a1d; --hi: #ff9c8f; }
.yellow, .p-yellow { --c: #edd44b; --lo: #908029; --hi: #fff98f; }
.green, .p-green { --c: #6dae4b; --lo: #40672c; --hi: #b2f893; }
.drivers .option {
  width: 101px;
  height: 24px;
  background: var(--c);
  border-color: var(--lo) var(--hi) var(--hi) var(--lo);
  box-shadow: inset 1px 1px var(--hi), inset -1px -1px var(--lo);
}
.drivers .option::after { border-color: var(--hi) var(--lo) var(--lo) var(--hi); }

.mainbar {
  flex: none;
  display: flex;
  flex-direction: column;
  width: 21px;
  border-left: 2px solid var(--dark);
  background: linear-gradient(90deg, var(--trough) 17px, #fff 17px);
}
.mainbar .arrow { width: 17px; height: 17px; padding: 1px; }
.trough { flex: 148; }
.mthumb {
  flex: 389;
  width: 17px;
  background: #fff;
  border: 2px solid;
  border-color: var(--light) var(--dark) var(--dark) var(--light);
  border-left-width: 1px;
}

.block { margin: 0 2px 4px 1px; border-bottom: 3px solid #e3e3fb; }
.block:last-child { margin-bottom: 0; }
.scroller + .block { border-top: 3px solid #e3e3fb; }
.scroller + .block .head { margin-top: 4px; }
.slice-tools { display: flex; align-items: center; gap: 4px; height: 44px; padding: 2px 3px 0 5px; }
.slice-tools .ico.g7 { margin-left: 2px; }
.opacity { flex: 1; margin: 0 0 0 -2px; }
.view-tools { display: flex; align-items: flex-start; height: 98px; padding: 10px 9px 10px 6px; }
.axes { width: 66px; height: 67px; margin: 7px 10px 0 0; font-size: 10px; }
.view-icons { display: grid; grid-template-columns: repeat(4, 21px); gap: 2px 6px; margin-top: 7px; }
.motion { display: grid; grid-template-columns: 11px 21px; gap: 2px 4px; align-items: center; margin: 6px 10px 0 6px; }
.overview { flex: 1; width: 150px; height: 80px; }

/* Sashes */
.vsash {
  display: flex;
  flex-direction: column;
  padding: 4px 2px 0 1px;
}
.vsash svg { width: 4px; height: 18px; }
.vsash::after {
  content: "";
  flex: 1;
  width: 4px;
  background: linear-gradient(90deg, var(--light) 2px, var(--dark) 2px);
}
.hsash { display: flex; align-items: center; gap: 1px; padding-left: 4px; }
.hsash svg { width: 18px; height: 4px; }
.hsash span { flex: 1; height: 3px; background: var(--dark); border-top: 1px solid var(--light); }

/* Viewers */
.views {
  display: grid;
  grid-template-rows: minmax(0, 444fr) 8px minmax(0, 400fr);
  padding-right: 2px;
}
.view3d {
  display: grid;
  place-items: center;
  border: 2px solid var(--edge);
  background: var(--lavender);
}
.cube { width: 412px; height: 412px; }
.marks { fill: #fff; font: 25px "Liberation Sans", sans-serif; text-anchor: middle; }
.marks .near { font-size: 29px; }
.marks .far { font-size: 20px; }

.panes {
  display: grid;
  grid-template-columns: repeat(3, minmax(0, 1fr));
  gap: 4px;
  padding: 2px;
  background: var(--edge);
}
.pane { display: flex; flex-direction: column; background: #fff; }
.strip { display: grid; place-items: center; height: 9px; background: var(--c); }
.strip .tri { margin: 4px 0 0; }
.pane-row {
  display: grid;
  grid-template-columns: 21px minmax(0, 1fr) 13px 21px minmax(0, 1fr) 13px;
  gap: 1px 2px;
  padding: 0 1px;
}
.pane-row .option { height: 21px; font-size: 9px; }
.spin { display: grid; gap: 1px; }
.spin button { display: grid; place-items: center; border: 1px solid; border-color: var(--light) var(--dark) var(--dark) var(--light); }
.spin svg { width: 8px; height: 5px; }
.pane-slide { display: flex; align-items: center; gap: 3px; height: 24px; padding-left: 3px; }
.pane-slide .slider { flex: 162; }
.pane-slide .offset { flex: 117; height: 20px; }
.slice {
  flex: 1;
  background: #000;
  border: solid var(--c);
  border-width: 2px 0 0 2px;
  margin: 1px 0 0 2px;
  box-shadow: -1px -1px var(--dark);
}

/* Status line */
.status {
  display: flex;
  height: 27px;
  margin: 2px 0 0 2px;
  border-top: 1px solid var(--dark);
  box-shadow: inset 0 1px var(--light);
}
.status-text { flex: 1; padding: 6px 4px 0; }
.progress {
  width: 156px;
  height: 21px;
  margin-top: 3px;
  border: 1px solid;
  border-color: var(--dark) var(--light) var(--light) var(--dark);
}
.progress.small { width: 56px; }
```
